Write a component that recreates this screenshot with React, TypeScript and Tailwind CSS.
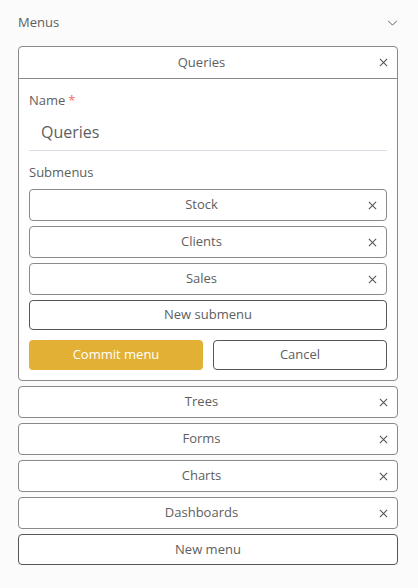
import React from "react";

const font = "font-['Open_Sans','Noto_Sans',sans-serif]";

function CloseIcon({ className = "" }: { className?: string }) {
  return (
    <svg viewBox="0 0 10 10" className={`h-[9px] w-[9px] ${className}`} fill="none" stroke="#555" strokeWidth="1.2">
      <path d="M1 1 L9 9 M9 1 L1 9" />
    </svg>
  );
}

function Chevron() {
  return (
    <svg viewBox="0 0 12 7" className="h-[6px] w-[11px]" fill="none" stroke="#555" strokeWidth="1.1">
      <path d="M1 1 L6 6 L11 1" />
    </svg>
  );
}

function ItemRow({ label }: { label: string }) {
  return (
    <div className="relative flex h-[32px] items-center justify-center rounded-[4px] border border-[#8a8a8a] bg-white text-[13px] text-[#5e5e5e]">
      <span className="pr-[13px]">{label}</span>
      <CloseIcon className="absolute right-[9px]" />
    </div>
  );
}

export default function App() {
  const submenus = ["Stock", "Clients", "Sales"];
  const menus = ["Trees", "Forms", "Charts", "Dashboards"];

  return (
    <div className={`min-h-screen bg-[#fbfbfb] pl-[18px] pr-[20px] pt-[13px] ${font}`}>
      {/* section header */}
      <div className="flex h-[20px] items-center justify-between text-[13px] text-[#5e5e5e]">
        <span>Menus</span>
        <Chevron />
      </div>

      <div className="mt-[13px] flex flex-col gap-[5px]">
        {/* expanded menu being edited */}
        <div className="rounded-[4px] border border-[#8a8a8a] bg-white">
          <div className="relative flex h-[32px] items-center justify-center border-b border-[#8a8a8a] text-[13px] text-[#5e5e5e]">
            <span className="pr-[13px]">Queries</span>
            <CloseIcon className="absolute right-[9px]" />
          </div>

          <div className="px-[10px] pb-[10px] pt-[13px]">
            <div className="flex h-[18px] items-center text-[13px] text-[#5e5e5e]">
              Name<span className="ml-[3px] text-[#f06a6a]">*</span>
            </div>
            <div className="flex h-[41px] items-center border-b border-[#dcdce4] pl-[12px] pt-[4px] text-[16px] text-[#5e5e5e]">
              Queries
            </div>

            <div className="mt-[13px] flex h-[18px] items-center text-[13px] text-[#5e5e5e]">Submenus</div>

            <div className="mt-[7px] flex flex-col gap-[5px]">
              {submenus.map((s) => (
                <ItemRow key={s} label={s} />
              ))}
              <div className="flex h-[30px] items-center justify-center rounded-[4px] border border-[#555] text-[13px] text-[#5e5e5e]">
                New submenu
              </div>
            </div>

            <div className="mt-[10px] grid grid-cols-2 gap-[10px]">
              <button className="h-[30px] rounded-[4px] bg-[#e2b035] text-[13px] text-white">Commit menu</button>
              <button className="h-[30px] rounded-[4px] border border-[#555] bg-white text-[13px] text-[#5e5e5e]">Cancel</button>
            </div>
          </div>
        </div>

        {menus.map((m) => (
          <ItemRow key={m} label={m} />
        ))}
        <div className="flex h-[31px] items-center justify-center rounded-[4px] border border-[#555] bg-white text-[13px] text-[#5e5e5e]">
          New menu
        </div>
      </div>
    </div>
  );
}
